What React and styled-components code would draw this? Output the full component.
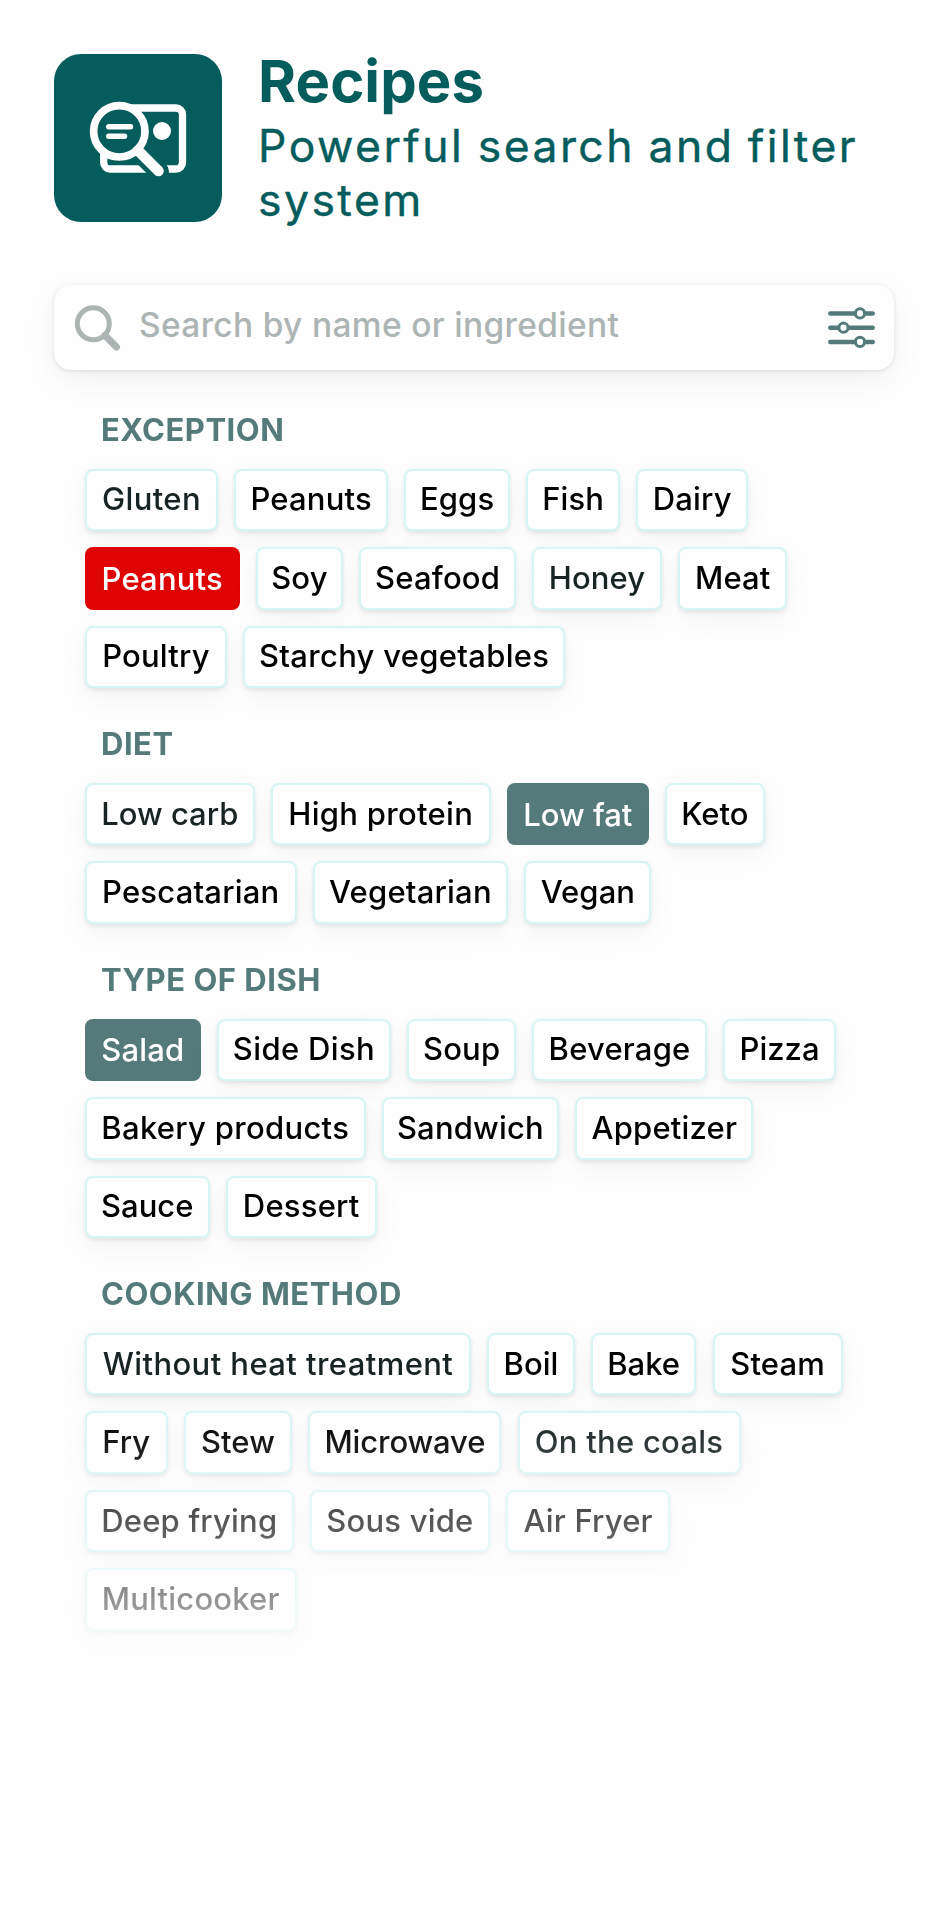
import React from "react";
import styled, { createGlobalStyle, css } from "styled-components";

const GlobalStyle = createGlobalStyle`
  * { box-sizing: border-box; }
  body { margin: 0; background: #fefefe; font-family: Inter, "Liberation Sans", sans-serif; }
`;

const Page = styled.main`
  width: 948px;
  height: 1923px;
  padding: 54px 54px 0;
  overflow: hidden;
`;

const Header = styled.header`
  display: flex;
  gap: 36px;
  height: 231px;
`;

const Logo = styled.svg`
  flex: none;
  width: 168px;
  height: 168px;
  border-radius: 27px;
  background: #045d5c;
`;

const Heading = styled.div`
  color: #045d5c;
`;

const Title = styled.h1`
  margin: -7px 0 0;
  font-size: 58px;
  line-height: 68px;
  font-weight: 700;
  letter-spacing: 0.1px;
`;

const Subtitle = styled.p`
  margin: 4px 0 0;
  font-size: 44.5px;
  line-height: 54px;
  letter-spacing: 2.45px;
  word-spacing: -1.5px;
  -webkit-text-stroke: 0.4px currentColor;
  white-space: nowrap;
`;

const SearchBar = styled.div`
  display: flex;
  align-items: center;
  width: 840px;
  height: 85px;
  padding: 0 16px 0 18px;
  border-radius: 17px;
  background: #fefefe;
  box-shadow: 0 1px 4px rgba(0, 0, 0, 0.1), 0 10px 32px rgba(0, 0, 0, 0.06);
`;

const SearchIcon = styled.svg`
  width: 50px;
  height: 50px;
`;

const FilterIcon = styled.svg`
  width: 52px;
  height: 48px;
`;

const Placeholder = styled.span`
  flex: 1;
  padding-left: 17px;
  margin-top: -6px;
  color: #acb5b4;
  font-size: 33.5px;
  line-height: 40px;
  font-weight: 500;
  letter-spacing: 0.33px;
`;

const Filters = styled.div`
  margin: 0 -54px;
  padding: 4px 54px 100px 85px;
  mask-image: linear-gradient(to bottom, #000 1043px, transparent 1365px);
`;

const Section = styled.section`
  padding-top: 37.2px;
`;

const SectionTitle = styled.h2`
  margin: 0 0 19.5px 16px;
  padding-bottom: 0;
  color: #547a7a;
  font-size: 31px;
  line-height: 38px;
  font-weight: 700;
  letter-spacing: 0.5px;
`;

const Rows = styled.div`
  display: flex;
  flex-direction: column;
  gap: 16px;
`;

const Row = styled.div`
  display: flex;
  gap: 16.2px;
`;

const selected = css`
  border: none;
  padding-top: 2px;
  color: #fff;
  box-shadow: none;
  background: ${(p) => (p.$tone === "excluded" ? "#df0404" : "#547a7a")};
`;

const Chip = styled.button`
  display: flex;
  align-items: center;
  justify-content: center;
  flex: none;
  width: ${(p) => p.$width}px;
  height: 62.5px;
  padding: 0 0 1px;
  border: 2px solid #d8f5f5;
  border-radius: 8px;
  background: #fefefe;
  box-shadow: 0 2px 5px rgba(0, 0, 0, 0.09), 0 9px 28px rgba(0, 0, 0, 0.05);
  color: ${(p) => (p.$tone === "soft" ? "#182323" : "#000")};
  font-family: inherit;
  font-size: 31px;
  line-height: 38px;
  font-weight: 500;
  letter-spacing: ${(p) => p.$track ?? 0.2}px;
  white-space: nowrap;
  ${(p) => (p.$tone === "excluded" || p.$tone === "included") && selected}
`;

// Each chip: [label, width, tone, tracking]
const sections = [
  {
    title: "EXCEPTION",
    rows: [
      [["Gluten", 133, "soft", 0.35], ["Peanuts", 154], ["Eggs", 105.5, , 0.1], ["Fish", 94, , 0.1], ["Dairy", 112]],
      [["Peanuts", 154.5, "excluded", 0.2], ["Soy", 87.5], ["Seafood", 156.5], ["Honey", 130, "soft", 0.1], ["Meat", 109, , 0.1]],
      [["Poultry", 142], ["Starchy vegetables", 322, , 0.3]],
    ],
  },
  {
    title: "DIET",
    rows: [
      [["Low carb", 169.5, "soft", 0], ["High protein", 220, , 0.3], ["Low fat", 142, "included", 0], ["Keto", 99.5, , 0]],
      [["Pescatarian", 211.5], ["Vegetarian", 195.5], ["Vegan", 127, , 0.1]],
    ],
  },
  {
    title: "TYPE OF DISH",
    rows: [
      [["Salad", 115.5, "included", 0.15], ["Side Dish", 174.5, , 0.35], ["Soup", 108.5], ["Beverage", 175], ["Pizza", 112.5, , 0]],
      [["Bakery products", 280.5, , 0.3], ["Sandwich", 177.5], ["Appetizer", 178]],
      [["Sauce", 124.5, , 0], ["Dessert", 151]],
    ],
  },
  {
    title: "COOKING METHOD",
    rows: [
      [["Without heat treatment", 386, "soft", 0.42], ["Boil", 87.5, , 0], ["Bake", 105.5, , 0], ["Steam", 130, , 0.1]],
      [["Fry", 82.5, , 0], ["Stew", 108.5, , 0.1], ["Microwave", 193, , -0.1], ["On the coals", 223, "soft", 0.25]],
      [["Deep frying", 208.5], ["Sous vide", 180.5], ["Air Fryer", 163.5]],
      [["Multicooker", 211.5]],
    ],
  },
];

export default function App() {
  return (
    <Page>
      <GlobalStyle />
      <Header>
        <Logo viewBox="0 0 168 168" fill="none">
          <path d="M68 54H122A6.5 6.5 0 0 1 128.5 60.5V108.5A6.5 6.5 0 0 1 122 115H56.2A6.5 6.5 0 0 1 49.7 108.5V94" stroke="#fff" strokeWidth="7.3" />
          <path d="M86 98.7L105 117.3" stroke="#045d5c" strokeWidth="20" strokeLinecap="round" />
          <circle cx="65.3" cy="77.3" r="25.7" fill="#045d5c" stroke="#fff" strokeWidth="7.7" />
          <path d="M84 96.5L104.5 117" stroke="#fff" strokeWidth="10.5" strokeLinecap="round" />
          <path d="M54.8 72.8H76.5M54.8 82.3H70.5" stroke="#fff" strokeWidth="5.5" strokeLinecap="round" />
          <circle cx="108" cy="77" r="9" fill="#fff" />
        </Logo>
        <Heading>
          <Title>Recipes</Title>
          <Subtitle>Powerful search and filter<br />system</Subtitle>
        </Heading>
      </Header>

      <SearchBar>
        <SearchIcon viewBox="0 0 50 50" fill="none" stroke="#acb5b4" strokeLinecap="round">
          <circle cx="21.3" cy="20.8" r="16" strokeWidth="5" />
          <path d="M33 32.5L44.5 44" strokeWidth="7" />
        </SearchIcon>
        <Placeholder>Search by name or ingredient</Placeholder>
        <FilterIcon viewBox="0 0 52 48" fill="#fff" stroke="#547a7a" strokeLinecap="round">
          <path d="M4.3 9.4H46.7M4.3 23.7H46.7M4.3 37.9H46.7" strokeWidth="4.5" />
          <g strokeWidth="3">
            <circle cx="34" cy="9.4" r="4.6" />
            <circle cx="17.5" cy="23.7" r="4.6" />
            <circle cx="34" cy="37.9" r="4.6" />
          </g>
        </FilterIcon>
      </SearchBar>

      <Filters>
        {sections.map((section) => (
          <Section key={section.title}>
            <SectionTitle>{section.title}</SectionTitle>
            <Rows>
              {section.rows.map((row, i) => (
                <Row key={i}>
                  {row.map(([label, width, tone, track]) => (
                    <Chip key={label} $width={width} $tone={tone} $track={track}>
                      {label}
                    </Chip>
                  ))}
                </Row>
              ))}
            </Rows>
          </Section>
        ))}
      </Filters>
    </Page>
  );
}
